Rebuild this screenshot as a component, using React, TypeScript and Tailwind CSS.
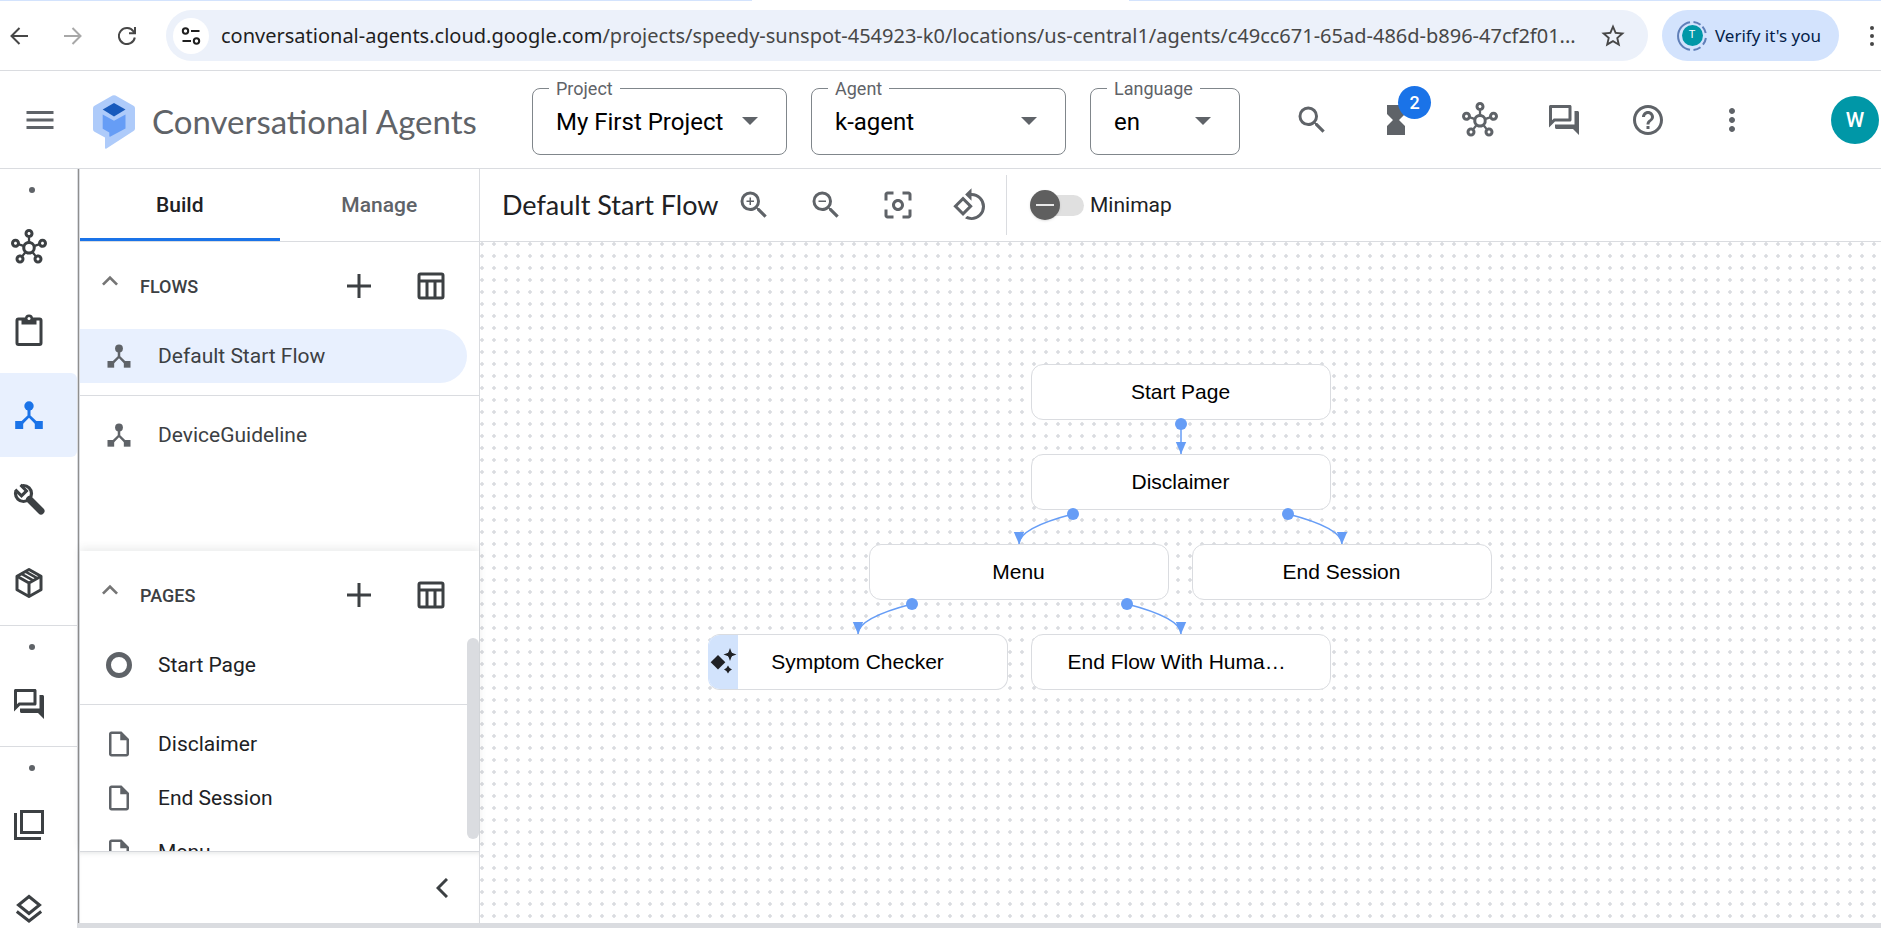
import React, { useState } from 'react';
import {
  MdCenterFocusWeak,
  MdHelpOutline,
  MdHourglassFull,
  MdKeyboardArrowUp,
  MdMenu,
  MdMoreVert,
  MdOutlineForum,
  MdOutlineHub,
  MdOutlineInsertDriveFile,
  MdOutlineRotate90DegreesCcw,
  MdSearch,
  MdStarBorder,
  MdZoomIn,
  MdZoomOut,
} from 'react-icons/md';

/* ---------- icons ---------- */

type IconProps = { className?: string };

const FlowIcon = ({ className }: IconProps) => (
  <svg viewBox="0 0 36 36" className={className} fill="currentColor" aria-hidden="true">
    <circle cx="18" cy="9" r="4.7" />
    <path d="M16.5 11h3v7.4l8 7.6-2.2 2.2L18 20.8l-7.3 7.4L8.500 26l8-7.600z" />
    <rect x="4.2" y="24" width="8" height="8" />
    <rect x="23.8" y="24" width="8" height="8" />
  </svg>
);

const PlusIcon = ({ className }: IconProps) => (
  <svg viewBox="0 0 24 24" className={className} fill="none" stroke="currentColor" strokeWidth="3" aria-hidden="true">
    <path d="M12 0v24M0 12h24" />
  </svg>
);

const TableIcon = ({ className }: IconProps) => (
  <svg viewBox="0 0 28 28" className={className} fill="none" stroke="currentColor" strokeWidth="3" aria-hidden="true">
    <rect x="2" y="2" width="24" height="24" rx="1.5" />
    <path d="M2 9h24M10 9v17M18 9v17" />
  </svg>
);

const ClipboardIcon = ({ className }: IconProps) => (
  <svg viewBox="0 0 36 36" className={className} fill="none" stroke="currentColor" strokeWidth="3" aria-hidden="true">
    <rect x="6" y="6" width="24" height="25.5" rx="1.5" />
    <path d="M10.5 5.5h15v6h-15z" fill="currentColor" stroke="none" />
    <circle cx="18" cy="5.5" r="4" fill="currentColor" stroke="none" />
    <circle cx="18" cy="5.5" r="1.5" fill="#fff" stroke="none" />
  </svg>
);

const WrenchIcon = ({ className }: IconProps) => (
  <svg viewBox="0 0 36 36" className={className} aria-hidden="true">
    <circle cx="12.5" cy="12.5" r="8" fill="none" stroke="currentColor" strokeWidth="3.2" />
    <path d="M18.5 18.5L30 30" fill="none" stroke="currentColor" strokeWidth="7" strokeLinecap="round" />
    <path d="M2 8.5L8.5 2l7.500 7.500-6 6z" fill="#fff" />
    <path d="M4.2 8.6l6.300 6.300 5-5-6-6" fill="none" stroke="currentColor" strokeWidth="3" />
  </svg>
);

const CubeIcon = ({ className }: IconProps) => (
  <svg viewBox="0 0 36 36" className={className} fill="none" stroke="currentColor" strokeWidth="3" strokeLinejoin="round" aria-hidden="true">
    <path d="M18 4.5l12 6.7v13.6l-12 6.7-12-6.700V11.2z" />
    <path d="M6 11.2l12 6.8 12-6.800M18 18v13.5" />
    <path d="M10 8.6l12.500 7M14 6.4l12.500 7" strokeWidth="2.5" />
  </svg>
);

const CopiesIcon = ({ className }: IconProps) => (
  <svg viewBox="0 0 36 36" className={className} fill="none" stroke="currentColor" strokeWidth="3" aria-hidden="true">
    <rect x="10.5" y="4.5" width="21" height="21" />
    <path d="M4.5 6v25.500H30" />
  </svg>
);

const LayersIcon = ({ className }: IconProps) => (
  <svg viewBox="0 0 36 36" className={className} fill="none" stroke="currentColor" strokeWidth="3" aria-hidden="true">
    <path d="M18 5.500l10.500 8.500L18 22.500 7.500 14z" />
    <path d="M5.800 20.500L18 30l12.200-9.500" />
  </svg>
);

const ChevronLeft = ({ className }: IconProps) => (
  <svg viewBox="0 0 12 20" className={className} fill="none" stroke="currentColor" strokeWidth="3" aria-hidden="true">
    <path d="M11 1L2 10l9 9" />
  </svg>
);

const SparkIcon = ({ className }: IconProps) => (
  <svg viewBox="0 0 28 28" className={className} fill="currentColor" aria-hidden="true">
    <path d="M9 7l7.300 7.300L9 21.600l-7.300-7.300z" />
    <path d="M21 0l1.700 4.800 4.800 1.700-4.800 1.700L21 13l-1.700-4.800-4.800-1.700 4.800-1.700z" />
    <path d="M21 3l3.500 3.500L21 10l-3.500-3.500zM19 17.500l1.600 2.400 2.400 1.600-2.400 1.600-1.600 2.400-1.600-2.400-2.400-1.600 2.400-1.600z" />
  </svg>
);

const Logo = () => (
  <svg viewBox="0 0 42 54" className="h-[54px] w-[42px] shrink-0" aria-hidden="true">
    <path
      d="M19.5.6a3 3 0 0 1 3 0L40.500 10.700A3 3 0 0 1 42 13.300V33.500a3 3 0 0 1-1.500 2.600L13.500 53.600q-1.500.8-1.500-1V42.500L1.500 36.800A3 3 0 0 1 0 34.200V13.300a3 3 0 0 1 1.500-2.600z"
      fill="#aecbfa"
    />
    <path d="M21 8l11.500 6.500L21 21.500 9.700 14.500z" fill="#185abc" />
    <path d="M9.700 19.500l11.300 6.300 11.500-6.300v14L17.500 41.500q-1.200.7-1.200-.8V37.500L9.700 33.800z" fill="#669df6" />
  </svg>
);

/* ---------- browser bar ---------- */

const BrowserBar = () => (
  <div className="bg-white">
    <div className="flex h-px">
      <div className="w-2/5 bg-[#d3e3fd]" />
      <div className="w-1/5" />
      <div className="w-2/5 bg-[#d3e3fd]" />
    </div>
    <div className="flex h-[70px] items-center border-b border-[#dadce0]">
      <div className="flex w-[166px] shrink-0 items-center gap-9 pl-[10px] text-[#474747]">
        <button aria-label="Back" className="block">
          <svg viewBox="0 0 18 18" className="size-[18px]" fill="none" stroke="currentColor" strokeWidth="2">
            <path d="M9.500 1L1.500 9l8 8M1.500 9H18" />
          </svg>
        </button>
        <button aria-label="Forward" className="block text-[#a8a8a8]">
          <svg viewBox="0 0 18 18" className="size-[18px]" fill="none" stroke="currentColor" strokeWidth="2">
            <path d="M8.500 1l8 8-8 8M16.500 9H0" />
          </svg>
        </button>
        <button aria-label="Reload" className="block">
          <svg viewBox="0 0 18 18" className="size-[18px]" fill="none" stroke="currentColor" strokeWidth="2">
            <path d="M16.800 10.500A8 8 0 1 1 15.500 4.500L17 6.200M17 0v6.300h-6" />
          </svg>
        </button>
      </div>
      <div className="flex h-[51px] min-w-0 flex-1 items-center rounded-full bg-[#ecf1fa] pl-[7px] pr-[21px]">
        <button aria-label="Site settings" className="flex size-9 shrink-0 items-center justify-center rounded-full bg-white text-[#1f1f1f]">
          <svg viewBox="0 0 20 18" className="h-[18px] w-5" fill="none" stroke="currentColor" strokeWidth="2">
            <circle cx="4.500" cy="4" r="2.700" />
            <path d="M10 4h8.500M1.500 14H10" />
            <circle cx="15.500" cy="14" r="2.700" />
          </svg>
        </button>
        <p className="min-w-0 flex-1 truncate pl-3 font-['Noto_Sans',sans-serif] text-[20px] text-[#474747]">
          <span className="text-[#1f1f1f]">conversational-agents.cloud.google.com</span>
          /projects/speedy-sunspot-454923-k0/locations/us-central1/agents/c49cc671-65ad-486d-b896-47cf2f01...
        </p>
        <button aria-label="Bookmark" className="shrink-0 text-[#474747]">
          <MdStarBorder className="size-[28px]" />
        </button>
      </div>
      <button className="ml-[14px] flex h-[51px] shrink-0 items-center gap-2 rounded-full bg-[#d3e3fd] pl-[15px] pr-[18px] font-['Noto_Sans',sans-serif] text-[17px] text-[#041e49]">
        <span className="relative flex size-[30px] items-center justify-center">
          <svg viewBox="0 0 30 30" className="absolute inset-0" fill="none" stroke="#5f7fb8" strokeWidth="2">
            <path d="M13 1.150A14 14 0 0 0 13 28.850" />
            <path d="M16.500 1.100A14 14 0 0 1 23.500 3.800M25.500 5.700A14 14 0 0 1 28.700 12M28.900 17A14 14 0 0 1 26 23.700M23.500 26.200A14 14 0 0 1 16.500 28.900" />
          </svg>
          <span className="flex size-[21px] items-center justify-center rounded-full bg-[#0097a7] font-[Roboto,sans-serif] text-[11px] text-white">T</span>
        </span>
        Verify it's you
      </button>
      <button aria-label="Browser menu" className="flex w-[42px] shrink-0 flex-col items-end gap-1 pr-[7px]">
        <span className="size-1 rounded-full bg-[#474747]" />
        <span className="size-1 rounded-full bg-[#474747]" />
        <span className="size-1 rounded-full bg-[#474747]" />
      </button>
    </div>
  </div>
);

/* ---------- app header ---------- */

type PickerProps = { id: string; label: string; value: string; className: string };

const Picker = ({ id, label, value, className }: PickerProps) => (
  <fieldset className={`relative h-[76px] shrink-0 rounded-lg border border-[#80868b] pl-4 ${className}`}>
    <legend className="px-[7px] text-[18px] leading-5 text-[#5f6368]">
      <label htmlFor={id}>{label}</label>
    </legend>
    <select id={id} defaultValue={value} className="h-[46px] w-full appearance-none bg-transparent pl-[7px] text-[24px] leading-8 text-black outline-none">
      <option>{value}</option>
    </select>
    <svg viewBox="0 0 16 8" className="pointer-events-none absolute right-[28px] top-[18px] h-2 w-4" fill="#5f6368" aria-hidden="true">
      <path d="M0 0h16L8 8z" />
    </svg>
  </fieldset>
);

const HeaderButton = ({ label, children }: { label: string; children: React.ReactNode }) => (
  <button aria-label={label} className="relative flex size-[84px] shrink-0 items-center justify-center text-[#5f6368]">
    {children}
  </button>
);

const Header = () => (
  <header className="flex h-[98px] shrink-0 items-center border-b border-[#dadce0] bg-white">
    <button aria-label="Main menu" className="ml-[22px] shrink-0 text-[#5f6368]">
      <MdMenu className="size-9" />
    </button>
    <div className="ml-[35px] flex w-[439px] shrink-0 items-center gap-[17px] pt-1">
      <Logo />
      <h1 className="whitespace-nowrap pb-0.5 font-[Lato,sans-serif] text-[33px] leading-10 text-[#5f6368]">Conversational Agents</h1>
    </div>
    <div className="flex shrink-0 gap-6 pb-[6px]">
      <Picker id="project" label="Project" value="My First Project" className="w-[255px]" />
      <Picker id="agent" label="Agent" value="k-agent" className="w-[255px]" />
      <Picker id="language" label="Language" value="en" className="w-[150px]" />
    </div>
    <div className="ml-auto flex items-center">
      <HeaderButton label="Search"><MdSearch className="size-9" /></HeaderButton>
      <HeaderButton label="Operations">
        <MdHourglassFull className="size-9" />
        <span className="absolute left-[44px] top-2 flex size-[33px] items-center justify-center rounded-full bg-[#1a73e8] text-[18px] font-medium text-white">2</span>
      </HeaderButton>
      <HeaderButton label="Integrations"><MdOutlineHub className="size-9" /></HeaderButton>
      <HeaderButton label="Feedback"><MdOutlineForum className="size-9" /></HeaderButton>
      <HeaderButton label="Help"><MdHelpOutline className="size-9" /></HeaderButton>
      <HeaderButton label="More"><MdMoreVert className="size-9" /></HeaderButton>
    </div>
    <button aria-label="Account" className="ml-[57px] mr-[2px] flex size-12 shrink-0 items-center justify-center rounded-full bg-[#0097a7] pt-0.5 text-[21px] font-medium text-white">
      W
    </button>
  </header>
);

/* ---------- icon rail ---------- */

const RailButton = ({ label, active, children }: { label: string; active?: boolean; children: React.ReactNode }) => (
  <button
    aria-label={label}
    className={`flex h-[84px] w-full shrink-0 items-center rounded-r-[6px] pl-[11px] ${active ? 'bg-[#e8f0fe] text-[#1a73e8]' : 'text-[#3c4043]'}`}
  >
    {children}
  </button>
);

const RailDot = () => (
  <div className="h-9 shrink-0 pl-[29px] pt-[18px]">
    <div className="size-[6px] rounded-full bg-[#5f6368]" />
  </div>
);

const Rail = () => (
  <nav aria-label="Sections" className="flex w-[77px] shrink-0 flex-col overflow-hidden bg-white">
    <RailDot />
    <RailButton label="Playbooks"><MdOutlineHub className="size-9" /></RailButton>
    <RailButton label="Test cases"><ClipboardIcon className="size-9" /></RailButton>
    <RailButton label="Flows" active><FlowIcon className="size-9" /></RailButton>
    <RailButton label="Tools"><WrenchIcon className="size-9" /></RailButton>
    <RailButton label="Prebuilt"><CubeIcon className="size-9" /></RailButton>
    <div className="border-t border-[#dadce0]">
      <RailDot />
      <RailButton label="Conversations"><MdOutlineForum className="size-9" /></RailButton>
    </div>
    <div className="border-t border-[#dadce0]">
      <RailDot />
      <RailButton label="Versions"><CopiesIcon className="size-9" /></RailButton>
      <RailButton label="Environments"><LayersIcon className="size-9" /></RailButton>
    </div>
  </nav>
);

/* ---------- build panel ---------- */

const SectionHeader = ({ title }: { title: string }) => (
  <div className="flex h-[87px] shrink-0 items-center pl-[14px] pr-[34px]">
    <button aria-label={`Collapse ${title}`} className="pb-[10px] text-[#757575]">
      <MdKeyboardArrowUp className="size-8" />
    </button>
    <h2 className="flex-1 pl-[14px] pt-0.5 text-[18px] font-medium text-[#3c4043]">{title}</h2>
    <div className="flex items-center gap-[46px] text-[#3c4043]">
      <button aria-label={`Add to ${title}`}><PlusIcon className="size-6" /></button>
      <button aria-label={`${title} table`}><TableIcon className="size-7" /></button>
    </div>
  </div>
);

const Row = ({ icon, text, selected, dark }: { icon: React.ReactNode; text: string; selected?: boolean; dark?: boolean }) => (
  <li className={selected ? 'pr-3' : ''}>
    <button
      className={`flex h-[54px] w-full items-center gap-6 pl-6 text-left text-[21px] ${selected ? 'rounded-r-full bg-[#e8f0fe]' : ''} ${dark ? 'text-[#202124]' : 'text-[#3c4043]'}`}
    >
      <span className="flex size-[30px] items-center justify-center text-[#5f6368]">{icon}</span>
      <span className="pt-0.5">{text}</span>
    </button>
  </li>
);

const fileIcon = <MdOutlineInsertDriveFile className="size-[30px]" />;

const BuildPanel = () => (
  <aside className="flex w-[400px] shrink-0 flex-col border-r border-[#dadce0] bg-white">
    <div role="tablist" className="flex h-[73px] shrink-0 border-b border-[#dadce0] text-[21px] font-medium">
      <button role="tab" aria-selected="true" className="w-1/2 border-b-3 border-[#1a73e8] pt-[5px] text-[#202124]">Build</button>
      <button role="tab" aria-selected="false" className="w-1/2 pt-0.5 text-[#5f6368]">Manage</button>
    </div>
    <section className="flex min-h-0 flex-1 flex-col overflow-hidden">
      <SectionHeader title="FLOWS" />
      <ul>
        <Row icon={<FlowIcon className="size-[30px]" />} text="Default Start Flow" selected />
        <li className="my-3 h-px bg-[#dadce0]" />
        <Row icon={<FlowIcon className="size-[30px]" />} text="DeviceGuideline" />
      </ul>
    </section>
    <section className="z-10 flex h-[300px] shrink-0 flex-col shadow-[0_-3px_8px_rgba(60,64,67,0.1)]">
      <SectionHeader title="PAGES" />
      <div className="flex min-h-0 flex-1 overflow-hidden">
        <ul className="flex-1">
          <Row icon={<span className="size-[26px] rounded-full border-[5px] border-[#5f6368]" />} text="Start Page" dark />
          <li className="my-3 h-px bg-[#dadce0]" />
          <Row icon={fileIcon} text="Disclaimer" dark />
          <Row icon={fileIcon} text="End Session" dark />
          <Row icon={fileIcon} text="Menu" dark />
        </ul>
        <div className="w-3 pb-3">
          <div className="h-full rounded-full bg-[#dadce0]" />
        </div>
      </div>
    </section>
    <div className="flex h-[72px] shrink-0 items-center justify-end border-t border-[#dadce0] pr-[31px] text-[#3c4043] shadow-[inset_0_4px_5px_-3px_rgba(60,64,67,0.12)]">
      <button aria-label="Collapse panel"><ChevronLeft className="h-5 w-3" /></button>
    </div>
  </aside>
);

/* ---------- flow canvas ---------- */

const ToolButton = ({ label, children }: { label: string; children: React.ReactNode }) => (
  <button aria-label={label} className="flex size-[72px] items-center justify-center text-[#5f6368]">
    {children}
  </button>
);

const Toolbar = () => {
  const [on, setOn] = useState(false);
  return (
    <div className="flex h-[73px] shrink-0 items-center border-b border-[#dadce0] bg-white pl-[22px]">
      <h2 className="w-[216px] whitespace-nowrap font-[Lato,sans-serif] text-[27px] leading-8 text-[#202124]">Default Start Flow</h2>
      <div className="flex">
        <ToolButton label="Zoom in"><MdZoomIn className="size-9" /></ToolButton>
        <ToolButton label="Zoom out"><MdZoomOut className="size-9" /></ToolButton>
        <ToolButton label="Fit to screen"><MdCenterFocusWeak className="size-9" /></ToolButton>
        <ToolButton label="Reset layout"><MdOutlineRotate90DegreesCcw className="size-9" /></ToolButton>
      </div>
      <div className="h-[60px] w-px bg-[#dadce0]" />
      <label className="relative ml-[23px] flex items-center gap-[6px] text-[21px] text-[#202124]">
        <input type="checkbox" className="sr-only" checked={on} onChange={() => setOn(!on)} />
        <span className={`flex h-[21px] w-[54px] items-center rounded-full bg-[linear-gradient(90deg,transparent_15px,#e0e0e0_15px)] ${on ? 'justify-end' : ''}`}>
          <span className="flex size-[30px] items-center justify-center rounded-full bg-[#5f5f5f] shadow">
            <span className="h-[2px] w-[18px] bg-[#e8e8e8]" />
          </span>
        </span>
        <span className="pt-0.5">Minimap</span>
      </label>
    </div>
  );
};

type NodeProps = { text: string; className: string; spark?: boolean; clipped?: boolean };

const FlowNode = ({ text, className, spark, clipped }: NodeProps) => (
  <button
    className={`absolute flex h-14 w-[300px] items-center justify-center overflow-hidden rounded-xl border border-[#dadce0] bg-white font-['Liberation_Sans',Arial,sans-serif] text-[21px] text-black ${spark ? 'border-l-[#d2e3fc]' : ''} ${className}`}
  >
    {spark && (
      <span className="absolute inset-y-0 left-0 flex w-[29px] items-center justify-center bg-[#d2e3fc] text-[#202124]">
        <SparkIcon className="size-7" />
      </span>
    )}
    <span className={clipped ? 'w-[226px] truncate text-left' : ''}>{text}</span>
  </button>
);

/* Edge end points, measured from the horizontal centre of the canvas. */
const edges = [
  { from: [0, 182], to: [0, 212] },
  { from: [-108, 272], to: [-162, 302] },
  { from: [107, 272], to: [161, 302] },
  { from: [-269, 362], to: [-323, 392] },
  { from: [-54, 362], to: [0, 392] },
];

const Canvas = () => (
  <div className="relative min-h-0 flex-1 overflow-hidden bg-white bg-[radial-gradient(circle_at_2px_2px,#dadce0_1.5px,transparent_1.9px)] bg-size-[12px_12px]">
    <div className="absolute left-1/2 top-0">
      <FlowNode text="Start Page" className="-left-[150px] top-[122px]" />
      <FlowNode text="Disclaimer" className="-left-[150px] top-[212px]" />
      <FlowNode text="Menu" className="-left-[312px] top-[302px]" />
      <FlowNode text="End Session" className="left-[11px] top-[302px]" />
      <FlowNode text="Symptom Checker" className="-left-[473px] top-[392px]" spark />
      <FlowNode text="End Flow With Huma…" className="-left-[150px] top-[392px]" clipped />
      <svg viewBox="-400 0 800 500" className="pointer-events-none absolute -left-[400px] top-0 h-[500px] w-[800px] max-w-none" aria-hidden="true">
        {edges.map(({ from: [x1, y1], to: [x2, y2] }) => (
          <g key={`${x1}-${y1}`} fill="#669df6">
            <path d={`M${x1} ${y1}Q${x2} ${y1 + 14} ${x2} ${y2}`} fill="none" stroke="#669df6" strokeWidth="1.5" />
            <circle cx={x1} cy={y1} r="6" />
            <path d={`M${x2 - 5.2} ${y2 - 12}h10.4l-5.2 12z`} />
          </g>
        ))}
      </svg>
    </div>
  </div>
);

export default function App() {
  return (
    <div className="flex h-screen flex-col overflow-hidden bg-white font-[Roboto,sans-serif] text-[#202124]">
      <BrowserBar />
      <Header />
      <div className="flex min-h-0 flex-1">
        <Rail />
        <div className="flex min-w-0 flex-1 flex-col border-b-5 border-[#dadce0]">
          <div className="flex min-h-0 flex-1">
            <div className="w-[3px] shrink-0 border-x border-[#dadce0] bg-[#8f8f8f]" />
            <BuildPanel />
            <main className="flex min-w-0 flex-1 flex-col">
              <Toolbar />
              <Canvas />
            </main>
          </div>
        </div>
      </div>
    </div>
  );
}
